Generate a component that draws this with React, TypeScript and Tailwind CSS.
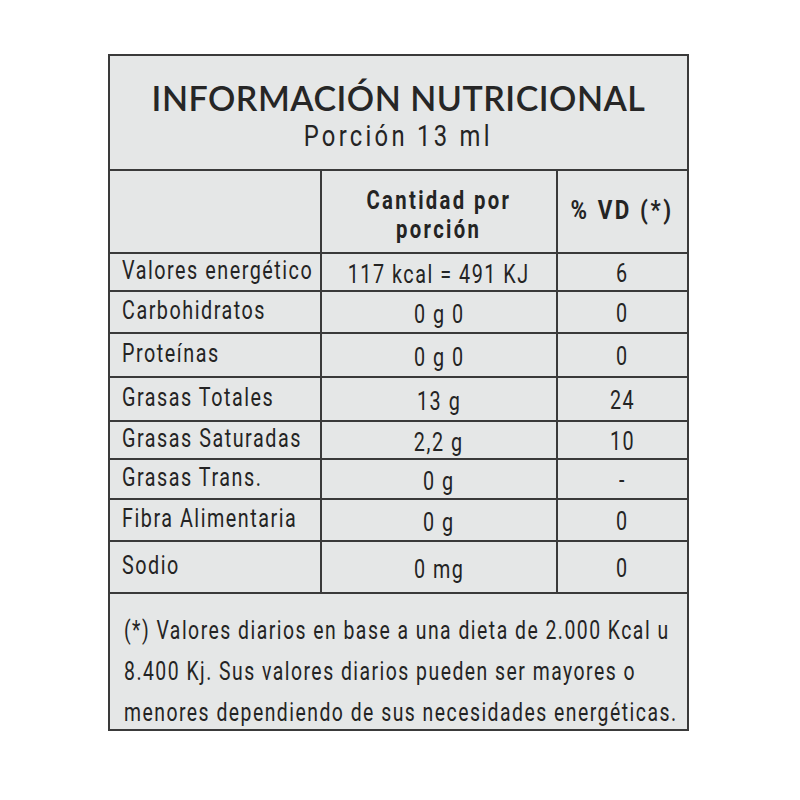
import React from 'react';

const rows: { label: string; amount: string; vd: string; h: string }[] = [
  { label: 'Valores energético', amount: '117 kcal = 491 KJ', vd: '6', h: 'h-[38px]' },
  { label: 'Carbohidratos', amount: '0 g 0', vd: '0', h: 'h-[42px]' },
  { label: 'Proteínas', amount: '0 g 0', vd: '0', h: 'h-[44px]' },
  { label: 'Grasas Totales', amount: '13 g', vd: '24', h: 'h-[44px]' },
  { label: 'Grasas Saturadas', amount: '2,2 g', vd: '10', h: 'h-[38px]' },
  { label: 'Grasas Trans.', amount: '0 g', vd: '-', h: 'h-[40px]' },
  { label: 'Fibra Alimentaria', amount: '0 g', vd: '0', h: 'h-[42px]' },
  { label: 'Sodio', amount: '0 mg', vd: '0', h: 'h-[52px]' },
];

// the label uses a narrow typeface, so Roboto gets squeezed horizontally
function Narrow({
  children,
  left = false,
  scale = 'scale-x-[0.76]',
}: {
  children: React.ReactNode;
  left?: boolean;
  scale?: string;
}) {
  return (
    <span className={`inline-block whitespace-nowrap ${scale} ${left ? 'origin-left' : 'origin-center'}`}>
      {children}
    </span>
  );
}

export default function App() {
  return (
    <div className="w-[800px] h-[800px] bg-white pl-[108px] pt-[54px] overflow-hidden">
      <div className="w-[581px] bg-[#e5e7e7] border-2 border-[#3a3a3a] text-[#242424] font-['Roboto',sans-serif]">
        {/* title */}
        <div className="h-[115px] flex flex-col items-center border-b-2 border-[#3a3a3a] pt-[22px]">
          <div className="font-['Lato',sans-serif] font-semibold text-[34px] leading-[40px] tracking-[0.5px] text-[#262626]">
            INFORMACIÓN NUTRICIONAL
          </div>
          <div className="text-[29px] leading-[32px] mt-[2px] tracking-[4px]">
            <Narrow scale="scale-x-[0.82]">Porción 13 ml</Narrow>
          </div>
        </div>

        {/* header */}
        <div className="grid grid-cols-[212px_236px_1fr] h-[83px] border-b-2 border-[#3a3a3a]">
          <div className="border-r-2 border-[#3a3a3a]" />
          <div className="border-r-2 border-[#3a3a3a] flex flex-col items-center justify-center pt-[6px] text-[26px] leading-[29px] font-bold tracking-[3px]">
            <Narrow scale="scale-x-[0.78]">Cantidad por</Narrow>
            <Narrow scale="scale-x-[0.78]">porción</Narrow>
          </div>
          <div className="flex items-center justify-center text-[26px] font-bold tracking-[3px] pb-[2px]">
            <Narrow scale="scale-x-[0.86]">% VD (*)</Narrow>
          </div>
        </div>

        {/* rows */}
        {rows.map((r) => (
          <div key={r.label} className={`grid grid-cols-[212px_236px_1fr] ${r.h} border-b-2 border-[#3a3a3a] text-[26px] leading-[30px] tracking-[2px]`}>
            <div className="border-r-2 border-[#3a3a3a] pl-[12px] flex items-center pb-[4px]">
              <Narrow left>{r.label}</Narrow>
            </div>
            <div className="border-r-2 border-[#3a3a3a] flex items-center justify-center pt-[4px]">
              <Narrow>{r.amount}</Narrow>
            </div>
            <div className="flex items-center justify-center pt-[2px]">
              <Narrow>{r.vd}</Narrow>
            </div>
          </div>
        ))}

        {/* footnote */}
        <div className="h-[135px] pl-[14px] pt-[16px] text-[26px] leading-[41px] tracking-[2px]">
          <div><Narrow left scale="scale-x-[0.745]">(*) Valores diarios en base a una dieta de 2.000 Kcal u</Narrow></div>
          <div><Narrow left scale="scale-x-[0.745]">8.400 Kj. Sus valores diarios pueden ser mayores o</Narrow></div>
          <div><Narrow left scale="scale-x-[0.745]">menores dependiendo de sus necesidades energéticas.</Narrow></div>
        </div>
      </div>
    </div>
  );
}
